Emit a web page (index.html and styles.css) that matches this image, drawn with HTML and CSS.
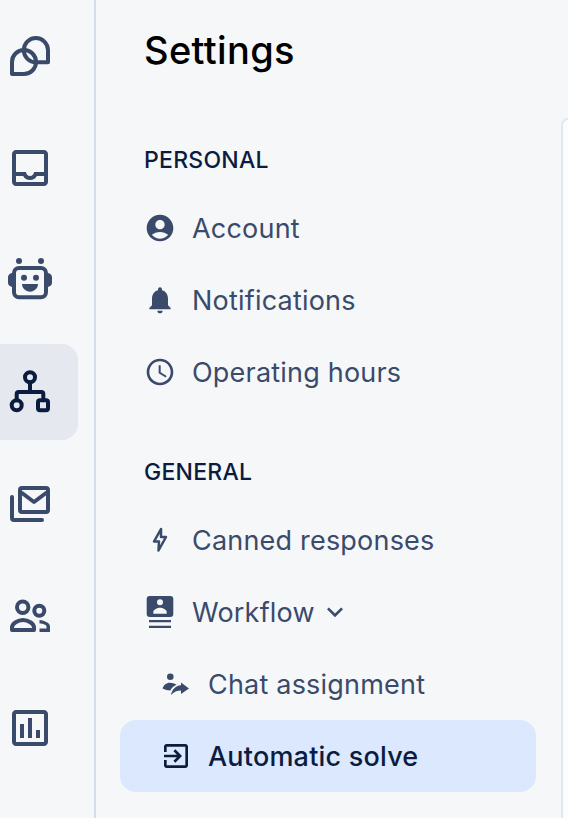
FILE: index.html
```html
<!DOCTYPE html>
<html lang="en">
<head>
<meta charset="utf-8">
<title>Settings</title>
<link rel="stylesheet" href="styles.css">
</head>
<body>
<aside class="rail">
  <a class="rail-item"><svg class="rail-icon" viewBox="0 0 48 48"><g class="line"><path d="M42 30.3H30a12.1 12.1 0 1 1 12-12.2z"/><path d="M6 42V30a12 12 0 1 1 12 12z"/></g></svg></a>
  <a class="rail-item"><svg class="rail-icon" viewBox="0 0 24 24"><path class="solid" d="M19 3H5c-1.1 0-2 .9-2 2v14c0 1.1.9 2 2 2h14c1.1 0 2-.9 2-2V5c0-1.1-.9-2-2-2zm0 16H5v-3h3.56c.69 1.19 1.97 2 3.45 2s2.75-.81 3.44-2H19v3zm0-5h-4.99c0 1.1-.9 2-2 2s-2-.9-2-2H5V5h14v9z"/></svg></a>
  <a class="rail-item"><svg class="rail-icon" viewBox="0 0 48 48"><rect class="line" x="8" y="12" width="32" height="29.3" rx="5"/><g class="solid"><circle cx="13" cy="5" r="3"/><circle cx="35" cy="5" r="3"/><circle cx="18" cy="21.7" r="3"/><circle cx="30" cy="21.7" r="3"/><path d="M16 28h16c0 4-3.6 7.7-8 7.7S16 32 16 28z"/><path d="M6 17v14c-2.4-.6-4-2.2-4-4v-6c0-1.8 1.600-3.400 4-4z"/><path d="M42 17v14c2.400-.6 4-2.200 4-4v-6c0-1.800-1.600-3.400-4-4z"/></g></svg></a>
  <a class="rail-item is-active"><svg class="rail-icon" viewBox="0 0 48 48"><g class="line"><circle cx="24" cy="9.300" r="5"/><circle cx="10.700" cy="37.300" r="5"/><rect x="32" y="32.300" width="10" height="10" rx="2"/><path d="M24 14.300v9.700M10.700 32.300v-6.300a2 2 0 0 1 2-2h22.600a2 2 0 0 1 2 2v6.300"/></g></svg></a>
  <a class="rail-item"><svg class="rail-icon" viewBox="0 0 48 48"><g class="line"><rect x="14" y="8" width="28" height="24" rx="2"/><path d="M16 13l12 9 12-9"/><path d="M6 17v21a2 2 0 0 0 2 2h28"/></g></svg></a>
  <a class="rail-item"><svg class="rail-icon" viewBox="0 0 48 48"><g class="line"><circle cx="16.700" cy="15.300" r="5.700"/><circle cx="33.300" cy="18.700" r="5"/><path d="M6 38v-2.500c0-4 6-7.500 11-7.500s11 3.500 11 7.500V38z"/></g><path class="solid" d="M33.500 28c5.500.6 10.500 3 10.500 6.500V40H33.500v-3.500H40.500v-2c0-1.700-3.500-2.800-7-3z"/></svg></a>
  <a class="rail-item"><svg class="rail-icon" viewBox="0 0 24 24"><path class="solid" d="M19 3H5c-1.100 0-2 .9-2 2v14c0 1.100.9 2 2 2h14c1.100 0 2-.9 2-2V5c0-1.100-.9-2-2-2zm0 16H5V5h14v14zM7 10h2v7H7zm4-3h2v10h-2zm4 6h2v4h-2z"/></svg></a>
</aside>

<nav class="panel">
  <h1 class="title">Settings</h1>
  <h2 class="section">PERSONAL</h2>
  <a class="row"><svg class="row-icon" viewBox="0 0 24 24"><path class="solid" d="M12 2C6.480 2 2 6.480 2 12s4.480 10 10 10 10-4.480 10-10S17.520 2 12 2zm0 4c1.930 0 3.500 1.570 3.500 3.500S13.930 13 12 13s-3.500-1.570-3.500-3.500S10.070 6 12 6zm0 14c-2.030 0-4.430-.820-6.140-2.880C7.550 15.800 9.680 15 12 15s4.450.8 6.140 2.120C16.430 19.180 14.030 20 12 20z"/></svg><span>Account</span></a>
  <a class="row"><svg class="row-icon" viewBox="0 0 24 24"><path class="solid" d="M12 22c1.100 0 2-.9 2-2h-4c0 1.100.9 2 2 2zm6-6v-5c0-3.070-1.630-5.640-4.500-6.320V4c0-.830-.670-1.500-1.500-1.500s-1.500.670-1.500 1.500v.680C7.640 5.360 6 7.920 6 11v5l-2 2v1h16v-1l-2-2z"/></svg><span>Notifications</span></a>
  <a class="row"><svg class="row-icon" viewBox="0 0 24 24"><path class="solid" d="M11.990 2C6.470 2 2 6.480 2 12s4.470 10 9.990 10C17.520 22 22 17.520 22 12S17.520 2 11.990 2zM12 20c-4.420 0-8-3.580-8-8s3.580-8 8-8 8 3.580 8 8-3.580 8-8 8zm.5-13H11v6l5.250 3.150.750-1.230-4.500-2.670z"/></svg><span>Operating hours</span></a>

  <h2 class="section section-next">GENERAL</h2>
  <a class="row"><svg class="row-icon" viewBox="0 0 32 32"><path class="bolt" d="M17 5L10 17.500h5L14.500 26.500L22 13h-5z"/></svg><span>Canned responses</span></a>
  <a class="row"><svg class="row-icon" viewBox="0 0 32 32"><rect class="solid" x="2.700" y="0" width="26.600" height="21" rx="3"/><circle class="cut" cx="16" cy="6.300" r="3"/><path class="cut" d="M9.300 17.700v-1.700c0-2.400 4-4.300 6.700-4.300s6.700 1.900 6.700 4.300v1.700z"/><path class="solid" d="M5 24h22v2.300H5zM5 29.700h22V32H5z"/></svg><span>Workflow</span><svg class="chevron" viewBox="0 0 24 24"><path class="solid" d="M16.590 8.590L12 13.170 7.410 8.590 6 10l6 6 6-6z"/></svg></a>
  <a class="row row-sub"><svg class="row-icon" viewBox="0 0 32 32"><circle class="solid" cx="10.300" cy="8.700" r="3.300"/><path class="solid" d="M2.500 20.500c1-3.500 4-5.800 7.200-5.800 2.500 0 5 .9 7 2-3 1-5 3-6.300 5.800-3-.1-5.400-.8-7.900-2z"/><path class="solid" d="M21 14.500l8 6-8 5.500v-3.500c-4 0-7 1.200-10 4.500 1-5 4-9.200 10-9.700z"/></svg><span>Chat assignment</span></a>
  <a class="row row-sub is-current"><svg class="row-icon" viewBox="0 0 24 24"><path class="solid" d="M10.090 15.590L11.500 17l5-5-5-5-1.410 1.410L12.670 11H3v2h9.670l-2.580 2.590zM19 3H5c-1.110 0-2 .9-2 2v4h2V5h14v14H5v-4H3v4c0 1.100.890 2 2 2h14c1.100 0 2-.9 2-2V5c0-1.100-.9-2-2-2z"/></svg><span>Automatic solve</span></a>
</nav>

<div class="card"></div>
</body>
</html>
```

FILE: styles.css
```css
* { box-sizing: border-box; }

html, body { margin: 0; height: 100%; }

body {
  display: flex;
  height: 818px;
  overflow: hidden;
  background: #f6f7f9;
  color: #3a4a6b;
  font-family: "Inter", "Noto Sans", sans-serif;
}

.rail {
  flex: 0 0 96px;
  border-right: 2px solid #d5dcea;
  padding-top: 8px;
  display: flex;
  flex-direction: column;
  gap: 16px;
}

.rail-item {
  width: 78px;
  height: 96px;
  flex: none;
  padding-left: 6px;
  display: flex;
  align-items: center;
  border-radius: 0 16px 16px 0;
  color: #3a4a6b;
}

.rail-item.is-active {
  background: #e5e8ee;
  color: #0b1c3f;
}

.rail-icon { width: 48px; height: 48px; display: block; overflow: visible; }

.solid { fill: currentColor; }

.cut { fill: #f6f7f9; }

.line {
  fill: none;
  stroke: currentColor;
  stroke-width: 4;
  stroke-linejoin: round;
  stroke-linecap: round;
}

.bolt {
  fill: none;
  stroke: currentColor;
  stroke-width: 2.500;
  stroke-linejoin: round;
}

.panel {
  flex: 0 0 465px;
  padding-left: 24px;
  padding-top: 18px;
}

.title {
  margin: 0 0 46px 24px;
  height: 64px;
  line-height: 64px;
  font-size: 38px;
  font-weight: 500;
  letter-spacing: 0.35px;
  color: #000;
}

.section {
  margin: 0 0 0 24px;
  height: 64px;
  line-height: 64px;
  font-size: 23px;
  font-weight: 500;
  letter-spacing: 0.25px;
  color: #0b1c3f;
}

.section-next { margin-top: 32px; }

.row {
  width: 416px;
  height: 72px;
  padding-left: 24px;
  display: flex;
  align-items: center;
  font-size: 27px;
  letter-spacing: 0.2px;
  color: #3a4a6b;
}

.row-icon { width: 32px; height: 32px; flex: none; margin-right: 16px; }

.row-sub { padding-left: 40px; }

.is-current {
  background: #dce8fd;
  border-radius: 16px;
  color: #0b1c3f;
  font-weight: 500;
}

.chevron { width: 32px; height: 32px; flex: none; margin-left: 4px; }

.card {
  flex: 1;
  margin-top: 118px;
  background: #fbfcfd;
  border-top: 2px solid #e3e7f0;
  border-left: 2px solid #e3e7f0;
  border-top-left-radius: 16px;
}
```
